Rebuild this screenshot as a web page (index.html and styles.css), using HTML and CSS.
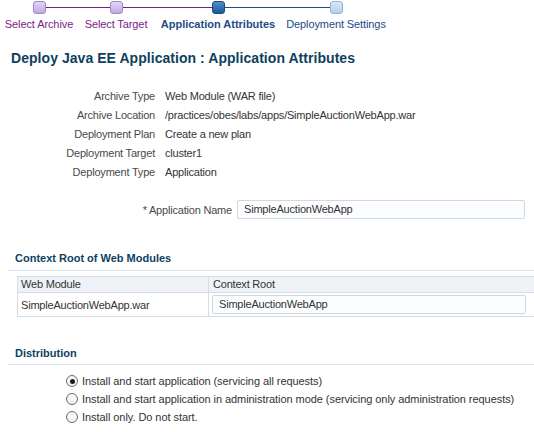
FILE: index.html
```html
<!DOCTYPE html>
<html>
<head>
<meta charset="utf-8">
<link rel="stylesheet" href="styles.css">
</head>
<body>
<div class="train">
  <div class="step s1 done">
    <div class="track"><span class="seg none"></span><span class="dot"></span><span class="seg purple"></span></div>
    <div class="lbl">Select Archive</div>
  </div>
  <div class="step s2 done">
    <div class="track"><span class="seg purple"></span><span class="dot"></span><span class="seg purple"></span></div>
    <div class="lbl">Select Target</div>
  </div>
  <div class="step s3 current">
    <div class="track"><span class="seg purple"></span><span class="dot"></span><span class="seg blue"></span></div>
    <div class="lbl">Application Attributes</div>
  </div>
  <div class="step s4 todo">
    <div class="track"><span class="seg blue"></span><span class="dot"></span><span class="seg none"></span></div>
    <div class="lbl">Deployment Settings</div>
  </div>
</div>

<h1 class="title">Deploy Java EE Application : Application Attributes</h1>

<div class="props">
  <div class="plabel">Archive Type</div><div class="pvalue">Web Module (WAR file)</div>
  <div class="plabel">Archive Location</div><div class="pvalue">/practices/obes/labs/apps/SimpleAuctionWebApp.war</div>
  <div class="plabel">Deployment Plan</div><div class="pvalue">Create a new plan</div>
  <div class="plabel">Deployment Target</div><div class="pvalue">cluster1</div>
  <div class="plabel">Deployment Type</div><div class="pvalue">Application</div>
</div>

<div class="namerow">
  <label class="namelabel">* Application Name</label>
  <div class="field namefield">SimpleAuctionWebApp</div>
</div>

<div class="section first">
  <h2 class="shead">Context Root of Web Modules</h2>
</div>

<div class="tablewrap">
  <div class="trow thead">
    <div class="c1">Web Module</div>
    <div class="c2">Context Root</div>
  </div>
  <div class="trow tbody">
    <div class="c1">SimpleAuctionWebApp.war</div>
    <div class="c2"><div class="field cellfield">SimpleAuctionWebApp</div></div>
  </div>
</div>

<div class="section second">
  <h2 class="shead">Distribution</h2>
</div>

<div class="radios">
  <label class="ropt"><span class="radio checked"></span>Install and start application (servicing all requests)</label>
  <label class="ropt"><span class="radio"></span>Install and start application in administration mode (servicing only administration requests)</label>
  <label class="ropt"><span class="radio"></span>Install only. Do not start.</label>
</div>
</body>
</html>
```

FILE: styles.css
```css
html, body {
  margin: 0;
  padding: 0;
  background: #ffffff;
}
body {
  font-family: "Liberation Sans", Arial, sans-serif;
  font-size: 11px;
  letter-spacing: -0.2px;
  color: #333333;
  width: 534px;
  height: 432px;
  overflow: hidden;
}

/* train */
.train {
  display: flex;
  height: 31px;
  padding-top: 1px;
  box-sizing: border-box;
}
.step { display: flex; flex-direction: column; align-items: stretch; }
.s1 { width: 78px; }
.s2 { width: 76px; }
.s3 { width: 128px; }
.s4 { width: 108px; }
.track {
  display: flex;
  align-items: center;
  height: 13px;
}
.seg { flex: 1; height: 1px; }
.seg.purple { background: #7e1a8a; }
.seg.blue { background: #1d4c88; }
.seg.none { background: transparent; }
.dot {
  width: 11px;
  height: 11px;
  border-radius: 3px;
  flex: none;
}
.done .dot {
  background: linear-gradient(#e2d6f3, #c0a8e4);
  border: 1px solid #9f88cc;
}
.current .dot {
  background: linear-gradient(#4f8cc8, #1b5a9b);
  border: 1px solid #174a80;
}
.todo .dot {
  background: linear-gradient(#dbe8f6, #b2cdea);
  border: 1px solid #93b4d9;
}
.lbl {
  text-align: center;
  margin-top: 4px;
  line-height: 13px;
  white-space: nowrap;
  letter-spacing: -0.1px;
}
.done .lbl { color: #7e1a8a; }
.current .lbl { color: #1d4c88; font-weight: bold; letter-spacing: 0; }
.todo .lbl { color: #234a86; }

/* title */
.title {
  margin: 19px 0 0 11px;
  font-size: 14px;
  line-height: 17px;
  font-weight: bold;
  letter-spacing: 0.05px;
  color: #0e3f5f;
}

/* properties */
.props {
  display: grid;
  grid-template-columns: 155px auto;
  column-gap: 10px;
  grid-auto-rows: 19px;
  margin-top: 19px;
  align-items: center;
}
.plabel { text-align: right; color: #4a4a4a; white-space: nowrap; }
.pvalue { color: #333333; white-space: nowrap; }

/* application name */
.namerow {
  display: flex;
  align-items: center;
  margin-top: 19px;
  height: 19px;
}
.namelabel {
  width: 232px;
  text-align: right;
  color: #4a4a4a;
  flex: none;
}
.field {
  box-sizing: border-box;
  height: 19px;
  line-height: 17px;
  border: 1px solid #d0d9e3;
  border-radius: 2px;
  background: #fcfdfe;
  padding-left: 6px;
  color: #333333;
}
.namefield {
  margin-left: 5px;
  width: 288px;
}

/* sections */
.section {
  margin-left: 8px;
  padding-left: 7px;
  border-bottom: 1px solid #d7e1ea;
}
.section.first { margin-top: 33px; padding-bottom: 5px; }
.section.second { margin-top: 30px; padding-bottom: 4px; }
.shead {
  margin: 0;
  font-size: 11px;
  line-height: 13px;
  font-weight: bold;
  letter-spacing: 0;
  color: #0e3f5f;
}

/* table */
.tablewrap {
  margin: 5px 0 0 17px;
  border: 1px solid #d6dde5;
  border-right: none;
}
.trow {
  display: grid;
  grid-template-columns: 190px 1fr;
}
.thead {
  background: #eff2f6;
  height: 15px;
  line-height: 15px;
  border-bottom: 1px solid #d6dde5;
}
.tbody {
  height: 23px;
  align-items: center;
  background: #ffffff;
}
.c1 { padding-left: 3px; }
.c2 { border-left: 1px solid #d6dde5; padding-left: 3px; height: 100%; display: flex; align-items: center; }
.cellfield { width: 314px; }
.thead .c2 { padding-left: 4px; }

/* radios */
.radios {
  margin: 7px 0 0 66px;
  display: flex;
  flex-direction: column;
  letter-spacing: -0.06px;
}
.ropt {
  display: flex;
  align-items: center;
  height: 18px;
  color: #333333;
  white-space: nowrap;
}
.radio {
  box-sizing: border-box;
  width: 12px;
  height: 12px;
  border-radius: 50%;
  border: 1px solid #6d6d6d;
  background: radial-gradient(circle at 50% 35%, #ffffff, #ececec);
  margin-right: 4px;
  flex: none;
  position: relative;
}
.radio.checked::after {
  content: "";
  position: absolute;
  left: 2.5px;
  top: 2.5px;
  width: 5px;
  height: 5px;
  border-radius: 50%;
  background: #1a1a1a;
}
```
